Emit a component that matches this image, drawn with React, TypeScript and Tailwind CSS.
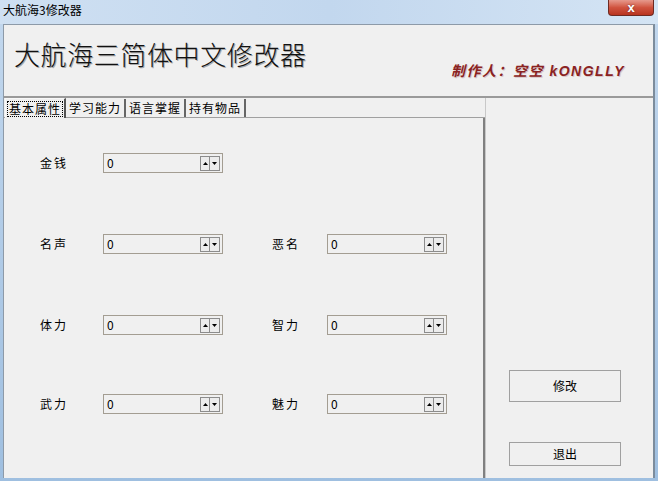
import React from "react";

const cjk = { fontFamily: '"Noto Sans CJK SC", "Liberation Sans", sans-serif' };

function Spin() {
  return (
    <div className="flex h-[15px] items-stretch mr-[2px]">
      <div className="w-[10px] border border-[#8c8c8c] bg-[#ececec] flex items-center justify-center">
        <svg width="5" height="3" viewBox="0 0 5 3"><path d="M2.5 0 L5 3 L0 3 Z" fill="#000" /></svg>
      </div>
      <div className="w-[10px] border-y border-r border-[#8c8c8c] bg-[#ececec] flex items-center justify-center">
        <svg width="5" height="3" viewBox="0 0 5 3"><path d="M0 0 L5 0 L2.5 3 Z" fill="#000" /></svg>
      </div>
    </div>
  );
}

function Field() {
  return (
    <div className="w-[120px] h-[20px] border border-[#a39d92] bg-[#f0f0f0] flex items-center justify-between">
      <span className="pl-[3px] text-[12px] text-black" style={cjk}>0</span>
      <Spin />
    </div>
  );
}

function Label({ text }: { text: string }) {
  return (
    <div className="text-[12px] text-black tracking-[2px] leading-none" style={cjk}>
      {text}
    </div>
  );
}

export default function App() {
  const tabs = ["基本属性", "学习能力", "语言掌握", "持有物品"];
  return (
    <div className="w-[658px] h-[481px] overflow-hidden bg-gradient-to-b from-[#c3d8ee] to-[#9fbfe0] flex flex-col">
      {/* Title bar */}
      <div className="h-[24px] flex items-start justify-between bg-gradient-to-r from-[#cfe0f2] via-[#c2d7ee] to-[#d4e4f4]">
        <div className="pl-[3px] pt-[2px] text-[12px] text-black leading-[16px]" style={cjk}>
          大航海3修改器
        </div>
        <div className="mr-[4px] w-[46px] h-[16px] rounded-b-[4px] border border-[#6e2a22] border-t-0 bg-gradient-to-b from-[#e6998d] via-[#d0533f] to-[#b8331f] flex items-center justify-center">
          <span className="text-white text-[13px] font-bold leading-none" style={{ fontFamily: '"Liberation Sans", sans-serif', textShadow: "0 0 2px #6e2a22" }}>x</span>
        </div>
      </div>

      {/* Client */}
      <div className="mx-[3px] flex-1 flex flex-col bg-[#f0f0f0] border-t border-l border-[#8d9aa8] border-r-[2px] border-r-[#7c8c9c]">
        {/* Header */}
        <div className="h-[73px] border-b-[2px] border-[#9a9a9a] flex flex-col">
          <div
            className="pl-[10px] pt-[12px] text-[26px] leading-[34px] text-[#111] tracking-[0.6px] font-light"
            style={{ ...cjk, textShadow: "1px 1px 0 #a8a8a8" }}
          >
            大航海三简体中文修改器
          </div>
          <div className="flex justify-end pr-[28px] -mt-[10px]">
            <span
              className="text-[14px] font-bold italic text-[#8a2222] tracking-[1.5px]"
              style={{ fontFamily: '"Liberation Sans", "Noto Sans CJK SC", sans-serif', textShadow: "1px 1px 0 #d8c8c8" }}
            >
              制作人：空空 kONGLLY
            </span>
          </div>
        </div>

        {/* Body */}
        <div className="flex-1 flex">
          {/* Tab control */}
          <div className="w-[481px] flex flex-col">
            <div className="h-[20px] flex items-end border-b border-[#a0a0a0] pl-[1px]">
              {tabs.map((t, i) => (
                <div
                  key={t}
                  className={
                    i === 0
                      ? "h-[20px] px-[1px] flex items-center border-t border-l border-r-[2px] border-[#f8f8f8] border-r-[#555] bg-[#f0f0f0] -mb-px"
                      : "h-[18px] px-[2px] flex items-center border-r-[2px] border-r-[#666]"
                  }
                >
                  <span
                    className={
                      "text-[12px] leading-[14px] tracking-[1px] text-black px-[1px] " +
                      (i === 0 ? "border border-dotted border-black" : "")
                    }
                    style={cjk}
                  >
                    {t}
                  </span>
                </div>
              ))}
            </div>
            <div className="flex-1 border-r-[2px] border-[#808080] pt-[35px] pl-[36px] flex flex-col gap-[61px]">
              <div className="flex items-center h-[20px]">
                <div className="w-[63px]"><Label text="金钱" /></div>
                <Field />
              </div>
              <div className="flex items-center h-[20px]">
                <div className="w-[63px]"><Label text="名声" /></div>
                <Field />
                <div className="w-[49px]" />
                <div className="w-[55px]"><Label text="恶名" /></div>
                <Field />
              </div>
              <div className="flex items-center h-[20px]">
                <div className="w-[63px]"><Label text="体力" /></div>
                <Field />
                <div className="w-[49px]" />
                <div className="w-[55px]"><Label text="智力" /></div>
                <Field />
              </div>
              <div className="flex items-center h-[20px] -mt-[2px]">
                <div className="w-[63px]"><Label text="武力" /></div>
                <Field />
                <div className="w-[49px]" />
                <div className="w-[55px]"><Label text="魅力" /></div>
                <Field />
              </div>
            </div>
          </div>

          {/* Right panel */}
          <div className="flex-1 border-l border-[#c8c8c8] flex flex-col items-start pl-[23px] pt-[272px]">
            <button
              className="w-[112px] h-[32px] border border-[#a0a0a0] bg-[#f0f0f0] text-[12px] text-black"
              style={cjk}
            >
              修改
            </button>
            <button
              className="mt-[40px] w-[112px] h-[24px] border border-[#a0a0a0] bg-[#f0f0f0] text-[12px] text-black"
              style={cjk}
            >
              退出
            </button>
          </div>
        </div>
      </div>
      <div className="h-[3px]" />
    </div>
  );
}
